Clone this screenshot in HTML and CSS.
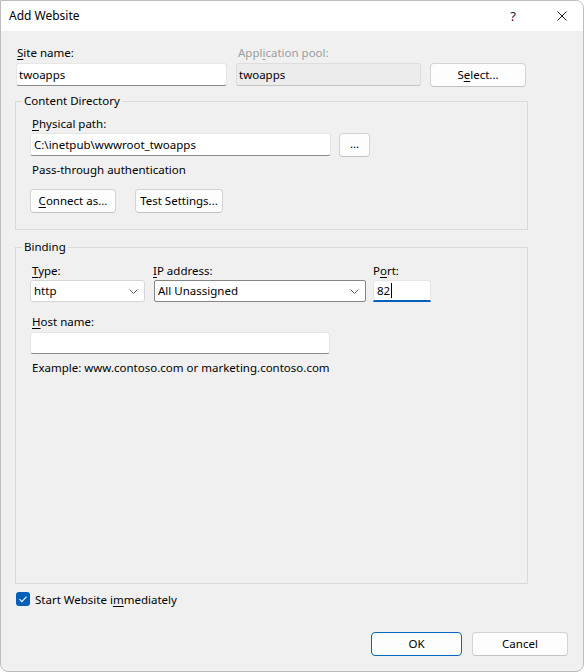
FILE: index.html
```html
<!DOCTYPE html>
<html>
<head>
<meta charset="utf-8">
<title>Add Website</title>
<link rel="stylesheet" href="styles.css">
</head>
<body>
<div class="window">
  <div class="titlebar">
    <span class="title">Add Website</span>
    <span class="help">?</span>
    <span class="close"><svg width="10" height="10" viewBox="0 0 10 10"><path d="M0.5 0.5 L9.5 9.5 M9.5 0.5 L0.5 9.5" stroke="#1b1b1b" stroke-width="1" fill="none"/></svg></span>
  </div>
  <div class="content">
    <div class="row-top">
      <div class="lbl lbl-site"><u>S</u>ite name:</div>
      <div class="lbl lbl-pool">Appl<u>i</u>cation pool:</div>
      <div></div>
      <div class="field w-site">twoapps</div>
      <div class="field disabled w-pool">twoapps</div>
      <div class="btn w-select">S<u>e</u>lect...</div>
    </div>

    <div class="group group-dir">
      <div class="legend">Content Directory</div>
      <div class="lbl lbl-indent mt7"><u>P</u>hysical path:</div>
      <div class="path-row">
        <div class="field w-path">C:\inetpub\wwwroot_twoapps</div>
        <div class="btn w-dots">...</div>
      </div>
      <div class="lbl lbl-indent mt5">Pass-through authentication</div>
      <div class="btn-row">
        <div class="btn w-connect"><u>C</u>onnect as...</div>
        <div class="btn w-test">Test Settings...</div>
      </div>
    </div>

    <div class="group group-bind">
      <div class="legend">Binding</div>
      <div class="bind-row">
        <div class="col col-type">
          <div class="lbl lbl-indent"><u>T</u>ype:</div>
          <div class="select light">http<svg class="chev" width="9" height="5" viewBox="0 0 9 5"><polyline points="0.5,0.5 4.5,4.5 8.5,0.5" stroke="#606060" stroke-width="1" fill="none"/></svg></div>
        </div>
        <div class="col col-ip">
          <div class="lbl lbl-ip"><u>I</u>P address:</div>
          <div class="select dark">All Unassigned<svg class="chev" width="9" height="5" viewBox="0 0 9 5"><polyline points="0.5,0.5 4.5,4.5 8.5,0.5" stroke="#606060" stroke-width="1" fill="none"/></svg></div>
        </div>
        <div class="col col-port">
          <div class="lbl">P<u>o</u>rt:</div>
          <div class="field focused">82<span class="caret"></span></div>
        </div>
      </div>
      <div class="lbl lbl-indent mt12"><u>H</u>ost name:</div>
      <div class="field w-host"></div>
      <div class="lbl lbl-indent mt6">Example: www.contoso.com or marketing.contoso.com</div>
    </div>

    <div class="check-row">
      <span class="checkbox"><svg width="14" height="14" viewBox="0 0 14 14"><path d="M3.5 7.2 L5.9 9.6 L10.5 4.6" stroke="#ffffff" stroke-width="1.1" fill="none"/></svg></span>
      <span class="check-label">Start Website i<u>m</u>mediately</span>
    </div>

    <div class="footer">
      <div class="btn primary w-ok">OK</div>
      <div class="btn w-cancel">Cancel</div>
    </div>
  </div>
</div>
</body>
</html>
```

FILE: styles.css
```css
html, body {
  margin: 0;
  padding: 0;
  background: #ffffff;
}

body {
  font-family: "Noto Sans", "Open Sans", sans-serif;
  font-size: 11.5px;
  line-height: 16px;
  color: #1a1a1a;
}

.window {
  box-sizing: border-box;
  width: 584px;
  height: 672px;
  border: 1px solid #bcbcbc;
  border-radius: 0 8px 8px 8px;
  background: #f0f0f0;
  overflow: hidden;
}

.titlebar {
  height: 30px;
  background: #ffffff;
  display: flex;
  align-items: center;
  padding-left: 8px;
  padding-right: 16px;
}

.title {
  font-size: 12px;
  color: #000;
}

.help {
  margin-left: auto;
  font-size: 13px;
  color: #1b1b1b;
  margin-right: 41px;
}

.close {
  display: flex;
  width: 10px;
  height: 10px;
}

.content {
  padding: 14px 15px 0 14px;
}

u {
  text-decoration: underline;
  text-decoration-thickness: 1px;
  text-underline-offset: 2px;
}

.lbl {
  height: 16px;
  white-space: nowrap;
  color: #000;
}

.lbl-site { padding-left: 1px; }
.lbl-pool { padding-left: 2px; color: #9d9d9d; }
.lbl-indent { padding-left: 2px; }
.lbl-ip { margin-left: -1px; }

.mt5 { margin-top: 5px; }
.mt6 { margin-top: 6px; }
.mt7 { margin-top: 7px; }
.mt12 { margin-top: 12px; }

.row-top {
  display: grid;
  grid-template-columns: 211px 185px 96px;
  grid-template-rows: 16px auto;
  column-gap: 9px;
  row-gap: 2px;
  margin-left: 1px;
  align-items: start;
}

.field {
  box-sizing: border-box;
  height: 23px;
  background: #ffffff;
  border: 1px solid #e6e6e6;
  border-bottom-color: #8a8a8a;
  border-radius: 3px;
  padding: 0 3px;
  line-height: 21px;
  white-space: nowrap;
  color: #000;
  display: flex;
  align-items: center;
}

.field.disabled {
  background: #ececec;
  border-color: #dddddd;
  border-bottom-color: #c4c4c4;
  padding-left: 2px;
}

.w-site { padding-left: 2px; }

.btn {
  box-sizing: border-box;
  height: 24px;
  background: #fdfdfd;
  border: 1px solid #d3d3d3;
  border-bottom-color: #c2c2c2;
  border-radius: 4px;
  display: flex;
  align-items: center;
  justify-content: center;
  white-space: nowrap;
  color: #000;
}

.btn.primary {
  border-color: #0067c0;
}

.group {
  box-sizing: border-box;
  width: 513px;
  border: 1px solid #dadada;
  padding: 0 14px;
}

.group-dir {
  margin-top: 14px;
  height: 129px;
}

.group-bind {
  margin-top: 17px;
  height: 337px;
}

.legend {
  width: fit-content;
  margin-top: -9px;
  margin-left: -8px;
  padding: 0 2px;
  background: #f0f0f0;
  height: 16px;
  color: #000;
}

.path-row {
  display: flex;
  align-items: flex-start;
  gap: 8px;
  margin-top: 1px;
}

.w-path { width: 301px; }
.w-dots { width: 31px; padding-bottom: 3px; }

.btn-row {
  display: flex;
  gap: 19px;
  margin-top: 11px;
}

.w-connect { width: 86px; }
.w-test { width: 88px; }

.bind-row {
  display: flex;
  margin-top: 8px;
}

.col {
  display: flex;
  flex-direction: column;
  gap: 1px;
}

.col-type { width: 115px; }
.col-ip { width: 212px; margin-left: 9px; }
.col-port { width: 58px; margin-left: 7px; }

.select {
  box-sizing: border-box;
  height: 22px;
  background: #ffffff;
  border-radius: 3px;
  padding: 0 6px 0 3px;
  display: flex;
  align-items: center;
  justify-content: space-between;
  color: #000;
  white-space: nowrap;
}

.select.light {
  border: 1px solid #d6d6d6;
}

.select.dark {
  border: 1px solid #868686;
  border-radius: 2px;
}

.chev {
  display: block;
  flex: none;
}

.field.focused {
  height: 22px;
  border-color: #e6e6e6;
  border-bottom: 2px solid #005fb8;
  border-radius: 3px 3px 0 0;
}

.caret {
  display: inline-block;
  width: 1px;
  height: 15px;
  background: #000;
  margin-left: 1px;
}

.w-host {
  width: 300px;
  height: 22px;
  margin-top: 2px;
}

.check-row {
  display: flex;
  align-items: flex-start;
  margin-top: 8px;
  margin-left: 1px;
}

.checkbox {
  display: flex;
  width: 14px;
  height: 14px;
  background: #005fb8;
  border-radius: 3px;
}

.check-label {
  margin-left: 5px;
  color: #000;
}

.footer {
  display: flex;
  justify-content: flex-end;
  gap: 10px;
  margin-top: 24px;
}

.w-ok { width: 91px; }
.w-cancel { width: 96px; }
```
